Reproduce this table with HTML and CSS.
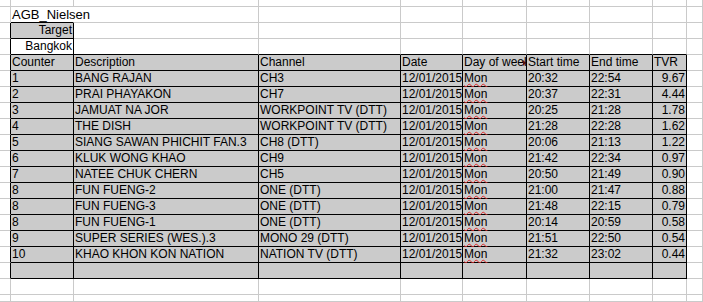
FILE: index.html
```html
<!DOCTYPE html>
<html lang="en">
<head>
  <meta charset="UTF-8" />
  <title>AGB_Nielsen</title>
  <link rel="stylesheet" href="styles.css">
</head>
<body>

  <div class="sheet">
    <div class="row edge"><div></div><div></div><div></div><div></div><div></div><div></div><div></div><div></div><div></div><div></div></div>

    <div class="row title"><div></div><div>AGB_Nielsen</div><div></div><div></div><div></div><div></div><div></div><div></div><div></div><div></div></div>
    <div class="row target"><div></div><div class="num">Target</div><div></div><div></div><div></div><div></div><div></div><div></div><div></div><div></div></div>
    <div class="row place"><div></div><div class="num">Bangkok</div><div></div><div></div><div></div><div></div><div></div><div></div><div></div><div></div></div>

    <div class="row tbl head"><div></div><div>Counter</div><div>Description</div><div>Channel</div><div>Date</div><div class="clip">Day of week</div><div>Start time</div><div>End time</div><div>TVR</div><div></div></div>

    <div class="row tbl"><div></div><div>1</div><div>BANG RAJAN</div><div>CH3</div><div>12/01/2015</div><div class="day"><span class="mon">Mon</span></div><div>20:32</div><div>22:54</div><div class="tvr">9.67</div><div></div></div>
    <div class="row tbl"><div></div><div>2</div><div>PRAI PHAYAKON</div><div>CH7</div><div>12/01/2015</div><div class="day"><span class="mon">Mon</span></div><div>20:37</div><div>22:31</div><div class="tvr">4.44</div><div></div></div>
    <div class="row tbl"><div></div><div>3</div><div>JAMUAT NA JOR</div><div>WORKPOINT TV (DTT)</div><div>12/01/2015</div><div class="day"><span class="mon">Mon</span></div><div>20:25</div><div>21:28</div><div class="tvr">1.78</div><div></div></div>
    <div class="row tbl"><div></div><div>4</div><div>THE DISH</div><div>WORKPOINT TV (DTT)</div><div>12/01/2015</div><div class="day"><span class="mon">Mon</span></div><div>21:28</div><div>22:28</div><div class="tvr">1.62</div><div></div></div>
    <div class="row tbl"><div></div><div>5</div><div>SIANG SAWAN PHICHIT FAN.3</div><div>CH8 (DTT)</div><div>12/01/2015</div><div class="day"><span class="mon">Mon</span></div><div>20:06</div><div>21:13</div><div class="tvr">1.22</div><div></div></div>
    <div class="row tbl"><div></div><div>6</div><div>KLUK WONG KHAO</div><div>CH9</div><div>12/01/2015</div><div class="day"><span class="mon">Mon</span></div><div>21:42</div><div>22:34</div><div class="tvr">0.97</div><div></div></div>
    <div class="row tbl"><div></div><div>7</div><div>NATEE CHUK CHERN</div><div>CH5</div><div>12/01/2015</div><div class="day"><span class="mon">Mon</span></div><div>20:50</div><div>21:49</div><div class="tvr">0.90</div><div></div></div>
    <div class="row tbl"><div></div><div>8</div><div>FUN FUENG-2</div><div>ONE (DTT)</div><div>12/01/2015</div><div class="day"><span class="mon">Mon</span></div><div>21:00</div><div>21:47</div><div class="tvr">0.88</div><div></div></div>
    <div class="row tbl"><div></div><div>8</div><div>FUN FUENG-3</div><div>ONE (DTT)</div><div>12/01/2015</div><div class="day"><span class="mon">Mon</span></div><div>21:48</div><div>22:15</div><div class="tvr">0.79</div><div></div></div>
    <div class="row tbl"><div></div><div>8</div><div>FUN FUENG-1</div><div>ONE (DTT)</div><div>12/01/2015</div><div class="day"><span class="mon">Mon</span></div><div>20:14</div><div>20:59</div><div class="tvr">0.58</div><div></div></div>
    <div class="row tbl"><div></div><div>9</div><div>SUPER SERIES (WES.).3</div><div>MONO 29 (DTT)</div><div>12/01/2015</div><div class="day"><span class="mon">Mon</span></div><div>21:51</div><div>22:50</div><div class="tvr">0.54</div><div></div></div>
    <div class="row tbl"><div></div><div>10</div><div>KHAO KHON KON NATION</div><div>NATION TV (DTT)</div><div>12/01/2015</div><div class="day"><span class="mon">Mon</span></div><div>21:32</div><div>23:02</div><div class="tvr">0.44</div><div></div></div>
    <div class="row tbl"><div></div><div></div><div></div><div></div><div></div><div></div><div></div><div></div><div class="tvr"></div><div></div></div>

    <div class="row"><div></div><div></div><div></div><div></div><div></div><div></div><div></div><div></div><div></div><div></div></div>
    <div class="row edge"><div></div><div></div><div></div><div></div><div></div><div></div><div></div><div></div><div></div><div></div></div>
  </div>

</body>
</html>
```

FILE: styles.css
```css
body {
  margin: 0;
  background-color: #ffffff;
  color: #000000;
  font-family: 'Liberation Sans', Arial, sans-serif;
  font-size: 12px;
  overflow: hidden;
}

.sheet {
  width: 703px;
}

.row {
  display: grid;
  grid-template-columns: 11px 63px 185px 142px 62px 64px 63px 63px 34px 16px;
  height: 16px;
}

.row.edge {
  height: 7px;
}

.row > div {
  box-sizing: border-box;
  border-right: 1px solid #cacaca;
  border-bottom: 1px solid #cacaca;
  padding: 0 1px;
  line-height: 15px;
  white-space: nowrap;
  overflow: hidden;
}

.num,
.tvr {
  text-align: right;
}

/* title spills over the next cells */
.title > div:nth-child(2) {
  overflow: visible;
  font-size: 13px;
  border-right-color: transparent;
  border-bottom-color: #000;
}

.target > div:first-child,
.place > div:first-child,
.tbl > div:first-child {
  border-right-color: #000;
}

.target > div:nth-child(2) {
  background-color: #cbcbcb;
  border-color: #000;
}

.place > div:nth-child(2) {
  border-right-color: #000;
}

.place > div:nth-child(n+2):nth-child(-n+9) {
  border-bottom-color: #000;
}

.tbl > div:nth-child(n+2):nth-child(-n+9) {
  background-color: #cbcbcb;
  border-color: #000;
}

.tbl > div.tvr {
  background-color: #ffffff;
}

.clip {
  position: relative;
}

.clip::after {
  content: "";
  position: absolute;
  right: 0;
  top: 5px;
  border-left: 3px solid #5a1010;
  border-top: 3px solid transparent;
  border-bottom: 3px solid transparent;
}

.row > .day {
  overflow: visible;
}

.mon {
  text-decoration: underline wavy #e0282a;
  text-decoration-thickness: 1px;
  text-decoration-skip-ink: none;
  text-underline-offset: 1px;
}
```
